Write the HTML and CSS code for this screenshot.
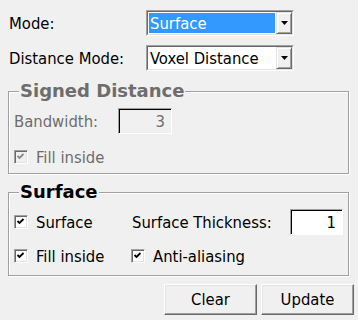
FILE: index.html
```html
<!DOCTYPE html>
<html>
<head>
<meta charset="utf-8">
<link rel="stylesheet" href="styles.css">
</head>
<body>
<div class="panel">
  <div class="field-row">
    <span class="lbl">Mode:</span>
    <div class="combo"><div class="combo-in">
      <span class="combo-text sel">Surface</span>
      <span class="combo-btn"><svg width="7" height="4" viewBox="0 0 7 4"><polygon points="0,0 7,0 3.5,4" fill="#000"/></svg></span>
    </div></div>
  </div>
  <div class="field-row">
    <span class="lbl">Distance Mode:</span>
    <div class="combo"><div class="combo-in">
      <span class="combo-text">Voxel Distance</span>
      <span class="combo-btn"><svg width="7" height="4" viewBox="0 0 7 4"><polygon points="0,0 7,0 3.5,4" fill="#000"/></svg></span>
    </div></div>
  </div>

  <fieldset class="group group-sd disabled">
    <legend>Signed Distance</legend>
    <div class="bw-row">
      <span class="bw-lbl">Bandwidth:</span>
      <div class="num num-dis">3</div>
    </div>
    <div class="check-row sd-fill">
      <span class="cb cb-dis"><svg width="12" height="12" viewBox="0 0 12 12"><path d="M2.5 5 L4.5 7 L8.5 3" fill="none" stroke="#8a8a8a" stroke-width="1.8"/></svg></span>
      <span>Fill inside</span>
    </div>
  </fieldset>

  <fieldset class="group group-sf">
    <legend>Surface</legend>
    <div class="sf-grid">
      <div class="cell">
        <span class="cb"><svg width="12" height="12" viewBox="0 0 12 12"><path d="M2.5 5 L4.5 7 L8.5 3" fill="none" stroke="#000" stroke-width="1.8"/></svg></span>
        <span>Surface</span>
      </div>
      <div class="cell cell-split">
        <span class="thick-lbl">Surface Thickness:</span>
        <div class="num">1</div>
      </div>
      <div class="cell">
        <span class="cb"><svg width="12" height="12" viewBox="0 0 12 12"><path d="M2.5 5 L4.5 7 L8.5 3" fill="none" stroke="#000" stroke-width="1.8"/></svg></span>
        <span>Fill inside</span>
      </div>
      <div class="cell">
        <span class="cb"><svg width="12" height="12" viewBox="0 0 12 12"><path d="M2.5 5 L4.5 7 L8.5 3" fill="none" stroke="#000" stroke-width="1.8"/></svg></span>
        <span>Anti-aliasing</span>
      </div>
    </div>
  </fieldset>

  <div class="buttons">
    <button class="btn">Clear</button>
    <button class="btn">Update</button>
  </div>
</div>
</body>
</html>
```

FILE: styles.css
```css
html, body {
  margin: 0;
  background: #f0f0f0;
}
body {
  font-family: "DejaVu Sans Condensed", "Liberation Sans", sans-serif;
  font-size: 16.5px;
  color: #000;
}
.panel {
  width: 358px;
  height: 320px;
  box-sizing: border-box;
  padding-top: 10px;
  overflow: hidden;
}
.field-row {
  display: flex;
  align-items: center;
  height: 26px;
  padding-left: 9px;
}
.field-row + .field-row {
  margin-top: 9px;
}
.lbl {
  width: 137px;
}
.combo {
  width: 148px;
  height: 26px;
  box-sizing: border-box;
  border: 1px solid;
  border-color: #a0a0a0 #fff #fff #a0a0a0;
}
.combo-in {
  height: 100%;
  box-sizing: border-box;
  border: 1px solid;
  border-color: #696969 #e3e3e3 #e3e3e3 #696969;
  background: #fff;
  display: flex;
}
.combo-text {
  flex: 1;
  display: flex;
  align-items: center;
  padding-left: 1px;
  margin: 1px;
}
.combo-text.sel {
  background: #3399ff;
  color: #fff;
}
.combo-btn {
  width: 16px;
  box-sizing: border-box;
  border: 1px solid;
  border-color: #e3e3e3 #696969 #696969 #e3e3e3;
  box-shadow: inset 1px 1px 0 #fff, inset -1px -1px 0 #a0a0a0;
  background: #f0f0f0;
  display: flex;
  align-items: center;
  justify-content: center;
}
.combo-btn svg {
  display: block;
}

.group {
  margin: 10px 9px 0 8px;
  padding: 0 5px 3px 5px;
  border: 1px solid #a0a0a0;
  box-shadow: 1px 1px 0 #fff, inset 1px 1px 0 #fff;
  min-width: 0;
}
.group legend {
  font-family: "DejaVu Sans", sans-serif;
  font-weight: bold;
  font-size: 18px;
  line-height: 20px;
  padding: 0 1px;
  margin-left: 5px;
  background: #f0f0f0;
}
.disabled {
  color: #6d6d6d;
}
.group-sf {
  margin-top: 8px;
  padding-bottom: 6px;
}
.bw-row {
  display: flex;
  align-items: center;
  height: 26px;
  margin-top: 7px;
}
.bw-lbl {
  width: 104px;
}
.num {
  width: 54px;
  height: 26px;
  box-sizing: border-box;
  border: 1px solid;
  border-color: #a0a0a0 #fff #fff #a0a0a0;
  box-shadow: inset 1px 1px 0 #000;
  background: #fff;
  display: flex;
  align-items: center;
  justify-content: flex-end;
  padding-right: 6px;
}
.num-dis {
  background: #f0f0f0;
  color: #6d6d6d;
}
.check-row {
  display: flex;
  align-items: center;
  gap: 8px;
  height: 26px;
}
.sd-fill {
  margin-top: 10px;
}
.cb {
  width: 14px;
  height: 14px;
  box-sizing: border-box;
  border: 1px solid;
  border-color: #a0a0a0 #fff #fff #a0a0a0;
  box-shadow: inset 1px 1px 0 #696969, inset -1px -1px 0 #e3e3e3;
  background: #fff;
  display: flex;
  align-items: center;
  justify-content: center;
  flex: none;
}
.cb svg {
  display: block;
}
.cb-dis {
  background: #f0f0f0;
}
.sf-grid {
  display: grid;
  grid-template-columns: 117px 1fr;
  row-gap: 8px;
  margin-top: 7px;
}
.cell {
  display: flex;
  align-items: center;
  gap: 8px;
  height: 26px;
}
.cell-split {
  justify-content: space-between;
}
.cell-split .num {
  width: 53px;
}
.thick-lbl {
  padding-left: 1px;
}
.buttons {
  display: flex;
  justify-content: flex-end;
  gap: 4px;
  padding-right: 4px;
  margin-top: 8px;
}
.btn {
  width: 93px;
  height: 31px;
  padding: 0;
  font: inherit;
  color: #000;
  background: #f0f0f0;
  border: 1px solid;
  border-color: #fff #696969 #696969 #fff;
  box-shadow: inset -1px -1px 0 #a0a0a0, inset 1px 1px 0 #e3e3e3;
}
```
